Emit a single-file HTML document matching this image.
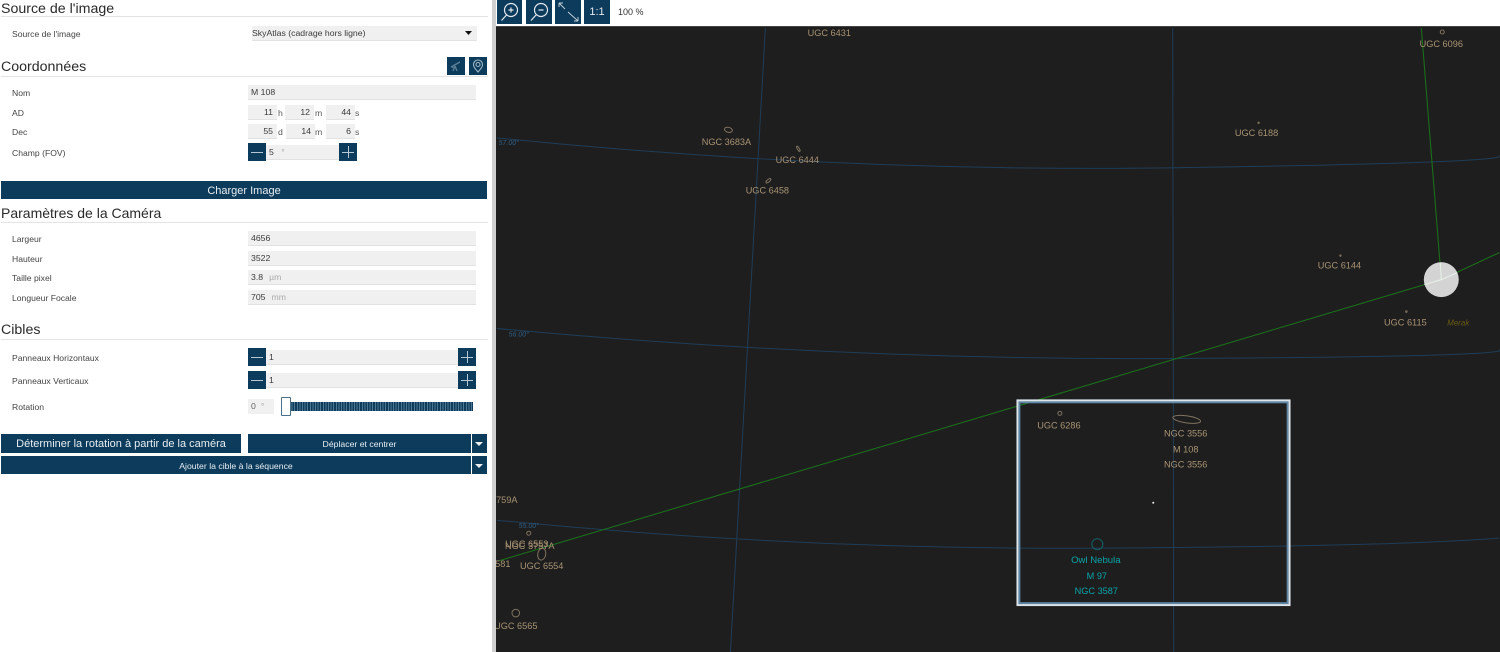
<!DOCTYPE html>
<html><head><meta charset="utf-8"><style>
html,body{margin:0;padding:0;background:#fff;width:1500px;height:652px;overflow:hidden}
body{position:relative;font-family:"Liberation Sans",sans-serif;color:#333}
.a,.h,.l,.f,.b{position:absolute;white-space:nowrap;box-sizing:border-box}
.h{left:1px;font-size:14.2px;line-height:18px;color:#2a2a2a}
.r{position:absolute;left:1px;width:487px;height:1px;background:#e4e4e4}
.l{left:12px;font-size:8.6px;line-height:12px;color:#444}
.f{background:#f0f0f0;border-bottom:1px solid #e2e2e2;font-size:8.7px;line-height:14px;height:15px;padding-left:3px;color:#3a3a3a}
.n{text-align:right;padding:0 4px 0 0}
.u{position:absolute;font-size:8.7px;line-height:12px;color:#555}
.g{color:#aaa;margin-left:6px}
.b{background:#0c3b5c;color:#e8eef2;text-align:center;font-size:10px}
.b svg{position:absolute}
</style></head><body>
<div class="h" style="top:0">Source de l'image</div><div class="r" style="top:16px"></div>
<div class="l" style="top:28px">Source de l'image</div>
<div class="f" style="left:252px;top:26px;width:225px;height:15px;padding-left:0;border-radius:1px">SkyAtlas (cadrage hors ligne)</div>
<svg class="a" style="left:465px;top:31px" width="8" height="5"><path d="M0 0H7L3.500 4Z" fill="#111"/></svg>

<div class="h" style="top:58px">Coordonnées</div><div class="r" style="top:76px"></div>
<div class="b" style="left:447px;top:57px;width:18px;height:18px"><svg style="left:0;top:0" width="18" height="18" fill="none" stroke="#5d8299" stroke-width="1.300"><path d="M4 10L13 5M5 9L6 11M8 9L6 14M8 9L10 14"/></svg></div>
<div class="b" style="left:469px;top:57px;width:18px;height:18px"><svg style="left:0;top:0" width="18" height="18" fill="none" stroke="#9fb6c5" stroke-width="1.100"><path d="M9 15C6 11.500 4.500 10 4.500 7.500A4.500 4.500 0 0 1 13.500 7.500C13.500 10 12 11.500 9 15Z"/><circle cx="9" cy="7.500" r="2"/></svg></div>

<div class="l" style="top:87px">Nom</div><div class="f" style="left:248px;top:85px;width:228px">M 108</div>
<div class="l" style="top:107px">AD</div>
<div class="f n" style="left:248px;top:105px;width:29px">11</div><div class="u" style="left:278px;top:107px">h</div>
<div class="f n" style="left:285px;top:105px;width:29px">12</div><div class="u" style="left:315px;top:107px">m</div>
<div class="f n" style="left:326px;top:105px;width:29px">44</div><div class="u" style="left:355px;top:107px">s</div>
<div class="l" style="top:126px">Dec</div>
<div class="f n" style="left:248px;top:124px;width:29px">55</div><div class="u" style="left:278px;top:126px">d</div>
<div class="f n" style="left:286px;top:124px;width:29px">14</div><div class="u" style="left:315px;top:126px">m</div>
<div class="f n" style="left:326px;top:124px;width:29px">6</div><div class="u" style="left:355px;top:126px">s</div>
<div class="l" style="top:147px">Champ (FOV)</div>
<div class="f" style="left:266px;top:145px;width:74px">5 <span class="g" style="margin-left:5px">°</span></div>
<div class="b" style="left:248px;top:143px;width:18px;height:18px"><svg style="left:0;top:0" width="18" height="18"><path d="M3 9.500H15" stroke="#b5c8d4"/></svg></div>
<div class="b" style="left:339px;top:143px;width:18px;height:18px"><svg style="left:0;top:0" width="18" height="18"><path d="M3 9.500H15M9.500 3V15" stroke="#b5c8d4"/></svg></div>

<div class="b" style="left:1px;top:181px;width:486px;height:18px;font-size:11px;line-height:20px">Charger Image</div>

<div class="h" style="top:204px;font-size:14px">Paramètres de la Caméra</div><div class="r" style="top:222px"></div>
<div class="l" style="top:233px">Largeur</div><div class="f" style="left:248px;top:231px;width:228px">4656</div>
<div class="l" style="top:253px">Hauteur</div><div class="f" style="left:248px;top:251px;width:228px">3522</div>
<div class="l" style="top:272px">Taille pixel</div><div class="f" style="left:248px;top:270px;width:228px">3.8<span class="g">µm</span></div>
<div class="l" style="top:292px">Longueur Focale</div><div class="f" style="left:248px;top:290px;width:228px">705<span class="g">mm</span></div>

<div class="h" style="top:321px">Cibles</div><div class="r" style="top:339px"></div>
<div class="l" style="top:352px">Panneaux Horizontaux</div>
<div class="f" style="left:266px;top:350px;width:194px">1</div>
<div class="b" style="left:248px;top:348px;width:18px;height:18px"><svg style="left:0;top:0" width="18" height="18"><path d="M3 9.500H15" stroke="#b5c8d4"/></svg></div>
<div class="b" style="left:458px;top:348px;width:18px;height:18px"><svg style="left:0;top:0" width="18" height="18"><path d="M3 9.500H15M9.500 3V15" stroke="#b5c8d4"/></svg></div>
<div class="l" style="top:375px">Panneaux Verticaux</div>
<div class="f" style="left:266px;top:373px;width:194px">1</div>
<div class="b" style="left:248px;top:371px;width:18px;height:18px"><svg style="left:0;top:0" width="18" height="18"><path d="M3 9.500H15" stroke="#b5c8d4"/></svg></div>
<div class="b" style="left:458px;top:371px;width:18px;height:18px"><svg style="left:0;top:0" width="18" height="18"><path d="M3 9.500H15M9.500 3V15" stroke="#b5c8d4"/></svg></div>
<div class="l" style="top:401px">Rotation</div>
<div class="f" style="left:248px;top:399px;width:26px;color:#666;border-bottom:0">0<span class="g" style="margin-left:5px">°</span></div>
<div class="a" style="left:290px;top:402px;width:183px;height:9px;background:repeating-linear-gradient(90deg,#0c3b5c 0,#0c3b5c 1.600px,#4f7892 1.600px,#4f7892 2.600px)"></div>
<div class="a" style="left:281px;top:397px;width:10px;height:19px;background:#fff;border:1px solid #4a6f8a;border-radius:1px"></div>

<div class="b" style="left:1px;top:434px;width:240px;height:19px;font-size:11px;line-height:20px">Déterminer la rotation à partir de la caméra</div>
<div class="b" style="left:248px;top:434px;width:223px;height:19px;font-size:8.700px;line-height:20px">Déplacer et centrer</div>
<div class="b" style="left:472px;top:434px;width:15px;height:19px"><svg style="left:3px;top:8px" width="9" height="5"><path d="M0 0H8L4 4Z" fill="#eee"/></svg></div>
<div class="b" style="left:1px;top:456px;width:470px;height:18px;font-size:8.700px;line-height:20px">Ajouter la cible à la séquence</div>
<div class="b" style="left:472px;top:456px;width:15px;height:18px"><svg style="left:3px;top:8px" width="9" height="5"><path d="M0 0H8L4 4Z" fill="#eee"/></svg></div>

<div class="a" style="left:491.500px;top:0;width:4px;height:652px;background:#d0d0d0"></div>

<div class="b" style="left:497px;top:0;width:25px;height:24px"><svg style="left:0;top:0" width="25" height="24" fill="none" stroke="#e3eaef" stroke-width="1.200"><circle cx="14" cy="10" r="6.500"/><path d="M9.500 15L4.500 20.500M11.500 10H16.500M14 7.500V12.500"/></svg></div>
<div class="b" style="left:526px;top:0;width:26px;height:24px"><svg style="left:0;top:0" width="26" height="24" fill="none" stroke="#e3eaef" stroke-width="1.200"><circle cx="15" cy="10" r="6.500"/><path d="M10 15L5 20.500M12.500 10H17.500"/></svg></div>
<div class="b" style="left:555px;top:0;width:26px;height:24px"><svg style="left:0;top:0" width="26" height="24" fill="none" stroke="#c6d3dc" stroke-width="0.900"><path d="M4 3L10 9M13 12L23 21M4 3H8M4 3V7M23 21H19M23 21V17"/></svg></div>
<div class="b" style="left:584px;top:0;width:26px;height:24px;font-size:11px;line-height:25px;color:#e3eaef">1:1</div>
<div class="a" style="left:618px;top:6px;font-size:9px;line-height:12px;color:#333">100 %</div>

<svg class="a" style="left:496px;top:26px;background:#1e1e1e;border-top:1px solid #444;box-sizing:border-box" width="1004" height="626" viewBox="496 26 1004 626" font-family="Liberation Sans, sans-serif" font-size="9.200" text-anchor="middle">
<g fill="none" stroke="#1f3d58" stroke-width="1">
<path d="M496 137Q840 172 1175 167T1500 155"/>
<path d="M496 328Q840 360 1180 358T1500 349"/>
<path d="M496 520Q800 550 1100 548T1500 538"/>
<path d="M765 27L730 652"/>
<path d="M1173 27L1174 652"/>
</g>
<g fill="none" stroke="#1b6e1b" stroke-width="1.100">
<path d="M497 561Q1000 410 1442 279L1500 252"/>
<path d="M1422 27L1442 279"/>
</g>
<circle cx="1442" cy="279" r="17.500" fill="#d4d4d4"/>
<path d="M1441 262L1442 279M1425 284L1442 279L1458 272" stroke="#e8f0e8" fill="none"/>
<g fill="none" stroke="#7f7360">
<ellipse cx="728" cy="129" rx="4" ry="2.500" transform="rotate(15 728 129)"/>
<ellipse cx="798" cy="148" rx="3" ry="1" transform="rotate(60 798 148)"/>
<ellipse cx="768" cy="180" rx="3" ry="1.300" transform="rotate(-40 768 180)"/>
<circle cx="1060" cy="413" r="2"/>
<ellipse cx="1187" cy="419" rx="14" ry="3.500" transform="rotate(8 1187 419)"/>
<circle cx="1443" cy="31" r="2"/>
<circle cx="515" cy="613" r="3.800"/>
<circle cx="528" cy="533" r="2"/>
<ellipse cx="541" cy="554" rx="4" ry="6" transform="rotate(10 541 554)"/>
<circle cx="1259" cy="122" r="0.700"/>
<circle cx="1341" cy="255" r="0.700"/>
<circle cx="1407" cy="311" r="0.800"/>
</g>
<g fill="#a89373" transform="translate(0 -1)">
<text x="829" y="36">UGC 6431</text>
<text x="726" y="145">NGC 3683A</text>
<text x="797" y="163">UGC 6444</text>
<text x="767" y="194">UGC 6458</text>
<text x="1257" y="136">UGC 6188</text>
<text x="1442" y="47">UGC 6096</text>
<text x="1340" y="269">UGC 6144</text>
<text x="1406" y="326">UGC 6115</text>
<text x="1059" y="429">UGC 6286</text>
<text x="1186" y="437">NGC 3556</text>
<text x="1186" y="453">M 108</text>
<text x="1186" y="468">NGC 3556</text>
<text x="506" y="504">759A</text>
<text x="526" y="548">UGC 6553</text>
<text x="529" y="550">NGC 3757A</text>
<text x="502" y="568">581</text>
<text x="541" y="570">UGC 6554</text>
<text x="515" y="630">UGC 6565</text>
</g>
<text x="1459" y="325" fill="#6b5c14" font-style="italic" font-size="8">Merak</text>
<g fill="#2f5f86" font-style="italic" font-size="7">
<text x="508" y="144">57.00°</text>
<text x="518" y="336">56.00°</text>
<text x="528" y="528">55.00°</text>
</g>
<circle cx="1097.500" cy="544" r="5.500" fill="none" stroke="#17585c" stroke-width="1.200"/>
<g fill="#0aa5aa">
<text x="1096" y="563" font-size="9.600">Owl Nebula</text>
<text x="1097" y="579">M 97</text>
<text x="1096.500" y="594">NGC 3587</text>
</g>
<rect x="1017.500" y="400" width="272.500" height="205" fill="none" stroke="#dde5ec" stroke-width="2"/>
<rect x="1019.500" y="402" width="268.500" height="201" fill="none" stroke="#5f88a8" stroke-width="1.800"/>
<circle cx="1153.500" cy="502.500" r="1" fill="#eee"/>
</svg>
</body></html>
